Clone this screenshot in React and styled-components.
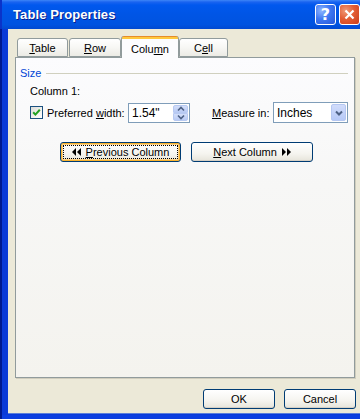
import React from "react"
import styled, { createGlobalStyle } from "styled-components"

const GlobalStyle = createGlobalStyle`
  html, body {
    margin: 0;
    padding: 0;
    background: #ffffff;
  }
  * {
    box-sizing: border-box;
  }
`

const Window = styled.div`
  width: 360px;
  height: 419px;
  overflow: hidden;
  display: flex;
  flex-direction: column;
  font-family: "Liberation Sans", Arial, sans-serif;
  font-size: 11px;
  color: #000;
`

const TitleBar = styled.div`
  height: 29px;
  flex: none;
  display: flex;
  align-items: center;
  padding-left: 13px;
  background: linear-gradient(
    180deg,
    #3d86f7 0px,
    #1a64f0 2px,
    #0058ee 5px,
    #0055e5 50%,
    #0053e0 85%,
    #0249d0 100%
  );
  box-shadow: inset 2px 0 0 #0a33c9;
`

const Title = styled.span`
  flex: 1;
  font-weight: bold;
  font-size: 13px;
  color: #fff;
  text-shadow: 1px 1px 0 #0a1f8c;
  letter-spacing: 0.1px;
  margin-top: -1px;
`

const CaptionButton = styled.div`
  width: 21px;
  height: 21px;
  flex: none;
  margin-left: 3px;
  margin-top: -1px;
  border: 1px solid #fff;
  border-radius: 3px;
  display: flex;
  align-items: center;
  justify-content: center;
  color: #fff;
  font-family: "DejaVu Sans", sans-serif;
  font-weight: bold;
  font-size: 16px;
  background: ${p =>
    p.close
      ? "radial-gradient(circle at 30% 30%, #ef9a78 0%, #e35d34 45%, #c93c1a 100%)"
      : "radial-gradient(circle at 30% 30%, #8fb6ff 0%, #3f78f2 45%, #2456d8 100%)"};
`

const Frame = styled.div`
  flex: 1;
  display: flex;
  padding: 0 0 5px 8px;
  background: #0a3ad8;
  box-shadow: inset 2px 0 0 #00198e, inset 0 -4px 0 #0b3ee0;
`

const Body = styled.div`
  flex: 1;
  display: flex;
  flex-direction: column;
  background: #ece9d8;
  padding-top: 7px;
  box-shadow: inset 0 -1px 0 #5a7edc;
`

const TabRow = styled.div`
  display: flex;
  align-items: flex-end;
  height: 21px;
  margin-left: 9px;
  position: relative;
  z-index: 1;
`

const Tab = styled.div`
  width: ${p => p.w}px;
  height: ${p => (p.active ? 22 : 19)}px;
  margin-right: ${p => p.gap || 0}px;
  margin-bottom: ${p => (p.active ? -1 : 0)}px;
  display: flex;
  align-items: center;
  justify-content: center;
  border: 1px solid #919b9c;
  border-bottom: ${p => (p.active ? "none" : "1px solid #919b9c")};
  border-top: ${p => (p.active ? "none" : "1px solid #919b9c")};
  border-radius: 3px 3px 0 0;
  padding-top: ${p => (p.active ? 3 : 0)}px;
  background: ${p =>
    p.active
      ? "linear-gradient(180deg, #e68b2c 0, #e68b2c 1px, #ffc83c 1px, #ffc83c 3px, #fcfcfe 3px, #fcfcfe 100%)"
      : "linear-gradient(180deg, #ffffff 0%, #f7f7f4 50%, #ecebe5 100%)"};
`

const Panel = styled.div`
  flex: 1;
  margin: 0 5px 0 7px;
  border: 1px solid #919b9c;
  box-shadow: 1px 1px 0 #d0cdbd;
  background: linear-gradient(180deg, #fcfcfe 0%, #f7f7f6 40%, #f4f3ee 100%);
  display: flex;
  flex-direction: column;
`

const GroupHeader = styled.div`
  display: flex;
  align-items: center;
  height: 14px;
  margin-top: 8px;
  padding-left: 4px;
  padding-right: 6px;
  color: #0046d5;
`

const GroupLine = styled.div`
  flex: 1;
  height: 1px;
  margin-left: 5px;
  background: #d0d0bf;
`

const Caption = styled.div`
  height: 13px;
  line-height: 13px;
  margin-top: 5px;
  padding-left: 14px;
`

const OptionRow = styled.div`
  display: flex;
  align-items: center;
  height: 21px;
  margin-top: 4px;
  padding-left: 14px;
`

const CheckBox = styled.div`
  width: 13px;
  height: 13px;
  flex: none;
  border: 1px solid #1c5180;
  background: linear-gradient(135deg, #dcdcd7 0%, #f2f2ef 60%, #ffffff 100%);
  display: flex;
  align-items: center;
  justify-content: center;
`

const Label = styled.span`
  width: ${p => p.w}px;
  margin-left: ${p => p.ml}px;
  flex: none;
  white-space: nowrap;
`

const U = styled.span`
  text-decoration: underline;
`

const Field = styled.div`
  width: ${p => p.w}px;
  height: ${p => p.h}px;
  flex: none;
  border: 1px solid #7f9db9;
  background: #fff;
  display: flex;
  align-items: center;
  padding: 1px;
`

const FieldText = styled.span`
  flex: 1;
  padding-left: 2px;
  font-size: 12px;
`

const Spin = styled.div`
  width: 15px;
  height: 16px;
  display: flex;
  flex-direction: column;
`

const SpinHalf = styled.div`
  flex: 1;
  display: flex;
  align-items: center;
  justify-content: center;
  background: linear-gradient(180deg, #d3def9 0%, #b9cbf5 100%);
  border: 1px solid #b7c9f2;
  border-radius: ${p => (p.up ? "2px 2px 0 0" : "0 0 2px 2px")};
`

const DropButton = styled.div`
  width: 15px;
  height: 17px;
  display: flex;
  align-items: center;
  justify-content: center;
  border: 1px solid #b5c7f2;
  border-radius: 2px;
  background: linear-gradient(180deg, #d1dcfb 0%, #b6c9f7 100%);
`

const ButtonRow = styled.div`
  display: flex;
  gap: 10px;
  margin-top: 19px;
  padding-left: 44px;
`

const Button = styled.div`
  width: ${p => p.w}px;
  height: 20px;
  flex: none;
  border: 1px solid #003c74;
  border-radius: 3px;
  display: flex;
  align-items: center;
  justify-content: center;
  gap: 5px;
  background: linear-gradient(180deg, #ffffff 0%, #f5f4ef 60%, #e6e4da 100%);
  box-shadow: ${p =>
    p.focused ? "inset 0 0 0 1px #f8b330, inset 0 0 0 2px #fcd38a" : "inset 0 -1px 0 #d6d0c5"};
  position: relative;
`

const FocusRing = styled.div`
  position: absolute;
  inset: 2px;
  border: 1px dotted #000;
  pointer-events: none;
`

const Footer = styled.div`
  display: flex;
  justify-content: flex-end;
  gap: 9px;
  margin-top: 11px;
  padding: 0 4px 5px 0;
`

function Arrows({ dir }) {
  const left = dir === "left"
  return (
    <svg width="9" height="8" viewBox="0 0 9 8">
      {left ? (
        <>
          <polygon points="4,0 4,8 0,4" fill="#000" />
          <polygon points="9,0 9,8 5,4" fill="#000" />
        </>
      ) : (
        <>
          <polygon points="0,0 0,8 4,4" fill="#000" />
          <polygon points="5,0 5,8 9,4" fill="#000" />
        </>
      )}
    </svg>
  )
}

function Chevron({ down, bold }) {
  return (
    <svg width="8" height="6" viewBox="0 0 8 6">
      <polyline
        points={down ? "1,1.5 4,4.5 7,1.5" : "1,4.5 4,1.5 7,4.5"}
        fill="none"
        stroke="#4d6185"
        strokeWidth={bold ? 2 : 1.6}
      />
    </svg>
  )
}

function App() {
  return (
    <Window>
      <GlobalStyle />
      <TitleBar>
        <Title>Table Properties</Title>
        <CaptionButton>?</CaptionButton>
        <CaptionButton close>
          <svg width="11" height="11" viewBox="0 0 11 11">
            <path d="M1.5 1.5 L9.5 9.5 M9.5 1.5 L1.5 9.5" stroke="#fff" strokeWidth="2.2" />
          </svg>
        </CaptionButton>
      </TitleBar>
      <Frame>
        <Body>
          <TabRow>
            <Tab w={51} gap={1}>
              <span><U>T</U>able</span>
            </Tab>
            <Tab w={52}>
              <span><U>R</U>ow</span>
            </Tab>
            <Tab w={58} active>
              <span>Colu<U>m</U>n</span>
            </Tab>
            <Tab w={49}>
              <span>C<U>e</U>ll</span>
            </Tab>
          </TabRow>
          <Panel>
            <GroupHeader>
              <span>Size</span>
              <GroupLine />
            </GroupHeader>
            <Caption>Column 1:</Caption>
            <OptionRow>
              <CheckBox>
                <svg width="9" height="9" viewBox="0 0 9 9">
                  <polyline points="1.2,4.2 3.4,6.6 7.8,1.8" fill="none" stroke="#21a121" strokeWidth="2" />
                </svg>
              </CheckBox>
              <Label ml={4} w={81}>
                Preferred <U>w</U>idth:
              </Label>
              <Field w={62} h={20}>
                <FieldText>1.54"</FieldText>
                <Spin>
                  <SpinHalf up>
                    <Chevron />
                  </SpinHalf>
                  <SpinHalf>
                    <Chevron down />
                  </SpinHalf>
                </Spin>
              </Field>
              <Label ml={22} w={61}>
                <U>M</U>easure in:
              </Label>
              <Field w={75} h={21}>
                <FieldText>Inches</FieldText>
                <DropButton>
                  <Chevron down bold />
                </DropButton>
              </Field>
            </OptionRow>
            <ButtonRow>
              <Button w={121} focused>
                <FocusRing />
                <Arrows dir="left" />
                <span><U>P</U>revious Column</span>
              </Button>
              <Button w={122}>
                <span><U>N</U>ext Column</span>
                <Arrows dir="right" />
              </Button>
            </ButtonRow>
          </Panel>
          <Footer>
            <Button w={72}>OK</Button>
            <Button w={72}>Cancel</Button>
          </Footer>
        </Body>
      </Frame>
    </Window>
  )
}

export default App
